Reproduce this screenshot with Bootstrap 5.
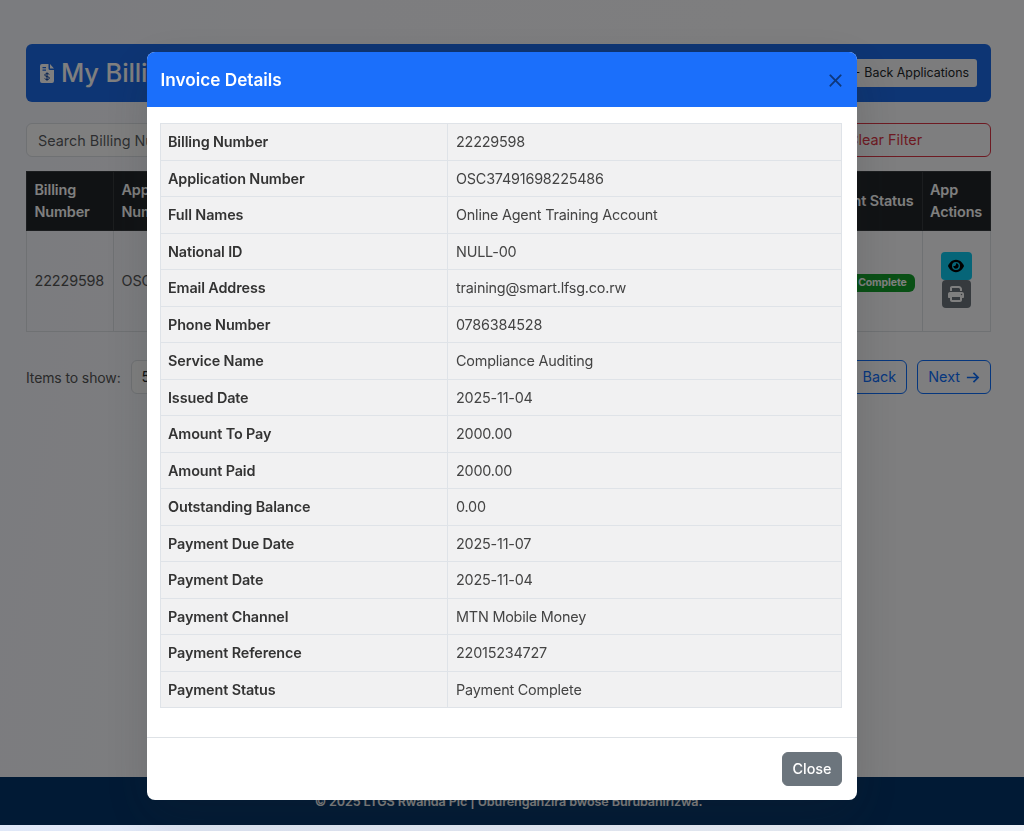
<!DOCTYPE html>
<html lang="en">
<head>
<meta charset="utf-8">
<title>My Billing Invoices</title>
<link href="https://cdn.jsdelivr.net/npm/bootstrap@5.3.0/dist/css/bootstrap.min.css" rel="stylesheet">
<style>
html,body{height:100%}
body{font-family:"Inter","Liberation Sans",sans-serif;font-size:14.4px;letter-spacing:-.12px;background:linear-gradient(90deg,#e0e8f8,#f0f4fa);color:#555;overflow:hidden;display:flex;flex-direction:column}
.page-shell{height:825px;display:flex;flex-direction:column;background:linear-gradient(100deg,#f6f8ff,#fbfbff 30%,#fdfdff);flex:none}
.page-main{flex:1;padding:44px 33px 0 26px}
.title-bar{height:58px;background:#1b6ae8;border-radius:6px;padding:0 14px;margin-bottom:21px;color:#fff}
.title-bar h2{font-size:25.5px;font-weight:500;margin:0;line-height:1}
.title-icon{width:14px;height:19px;fill:currentColor;margin-right:7px}
.back-btn{font-size:12.4px;padding:4px 8px;height:28px;background:#f8f9fa;color:#212529;border:0;border-radius:3px}
.filter-row{margin-bottom:14px;height:34px}
.search-box{flex:1;font-size:14.4px;height:34px;padding:5px 11px}
.clear-btn{width:212px;height:34px;font-size:14.4px;padding:0}
.bill-table{table-layout:fixed;width:100%;margin-bottom:28px;font-size:14.4px;--bs-table-color:#555}
.bill-table th{padding:7px 7.5px;line-height:22px;font-weight:600;vertical-align:middle}
.bill-table td{height:101px;padding:8px 7.5px;vertical-align:middle}
.col-num{width:87px}.col-app{width:140px}.col-wide{width:181.5px}.col-act{width:68.5px}
.status-head{white-space:nowrap}
.pay-badge{font-size:10.5px;font-weight:700;background:#12a02a;white-space:nowrap;padding:4px 8px 4px 5px;margin-left:.5px}
.act-cell{padding-bottom:10px!important}
.act-btn{width:31px;height:28px;padding:0;display:flex;align-items:center;justify-content:center;margin:0 auto;border-radius:4px}
.act-btn svg{width:16px;height:16px;fill:currentColor}
.act-view{background:#0dcaf0;color:#000;border:0}
.act-print{background:#6c757d;color:#fff;border:0;width:29px}
.pager-row{height:34px}
.items-label{font-size:14px}
.items-select{width:70px;height:34px;font-size:14.4px;padding:4px 10px;margin-left:10px}
.pager-btn{height:34px;padding:0 10px;font-size:14.4px;display:inline-flex;align-items:center;gap:5px}
.pager-gap{gap:10px}
.pager-btn svg{width:15px;height:15px;fill:none;stroke:currentColor;stroke-width:1.8}
.site-foot{height:48px;background:#03346a;color:#fff;font-size:12.6px;font-weight:600;text-align:center;padding:16px 7px 0 0;flex:none}
.modal-backdrop.dim-layer{height:825px;width:100%;bottom:auto}
.invoice-dialog{max-width:none;width:710.5px;margin:52px 0 0 146.5px}
.invoice-dialog .modal-content{border:0;border-radius:8px;height:748px;overflow:hidden}
.invoice-dialog .modal-header{background:#1b6ffb;color:#fff;height:55px;padding:1px 14px 0;border:0;border-radius:0}
.invoice-dialog .modal-title{font-size:17.2px;font-weight:600;line-height:1;letter-spacing:0}
.invoice-dialog .btn-close{margin:0;padding:0;width:15px;height:15px;background-size:15px;opacity:.5;flex:none}
.invoice-dialog .modal-body{padding:16px 15px 0 13.5px;flex:none;height:630px;margin:0}
.detail-table{width:100%;margin:0;font-size:14.4px;table-layout:fixed;--bs-table-bg:#f1f1f2;--bs-table-color:#444;border-color:#dfe3e8}
.detail-table th,.detail-table td{padding:7px;line-height:21.5px;height:36.5px}
.detail-table td{padding-left:8px;letter-spacing:-.2px}
.detail-table th{width:287px;font-weight:600;color:#333}
.invoice-dialog .modal-footer{border-top:1px solid #dee2e6;padding:14px 15px;height:63px;justify-content:flex-end}
.close-btn{margin:0;height:34px;width:60px;padding:0;font-size:14.4px;font-weight:500}
</style>
</head>
<body>
<div class="page-shell">
  <main class="page-main">
    <div class="title-bar d-flex align-items-center justify-content-between">
      <h2 class="d-flex align-items-center">
        <svg class="title-icon" viewBox="0 0 14 19"><path fill-rule="evenodd" d="M2 0h6.500v4.500a1.500 1.500 0 0 0 1.500 1.500h4v11a2 2 0 0 1-2 2H2a2 2 0 0 1-2-2V2a2 2 0 0 1 2-2zM10 0l4 4.500h-4zM2.500 3h3.500v1.200H2.500zM2.500 5.500h3.500v1.200H2.500z"/><path d="M9.300 10.400c-.4-.5-1.200-.8-2.300-.8-1.200 0-2.200.5-2.200 1.500 0 2 4.600.9 4.600 2.900 0 1-1 1.500-2.300 1.500-1.200 0-2-.4-2.500-1M7 8.400v8.400" fill="none" stroke="#0f45a0" stroke-width="1"/></svg>
        My Billing Invoices
      </h2>
      <button class="btn back-btn d-inline-flex align-items-center gap-1">← Back Applications</button>
    </div>
    <div class="filter-row d-flex gap-2">
      <input class="form-control search-box" placeholder="Search Billing Number">
      <button class="btn btn-outline-danger clear-btn"><span>Clear Filter</span></button>
    </div>
    <table class="table table-bordered bill-table">
      <colgroup><col class="col-num"><col class="col-app"><col class="col-wide"><col class="col-wide"><col class="col-wide"><col><col class="col-act"></colgroup>
      <thead class="table-dark"><tr><th>Billing Number</th><th>Application Number</th><th>Full Names</th><th>Service Name</th><th>Amount To Pay</th><th class="status-head">Payment Status</th><th>App Actions</th></tr></thead>
      <tbody><tr><td>22229598</td><td>OSC37491698225486</td><td>Online Agent</td><td>Compliance Auditing</td><td>2000.00</td><td><span class="badge pay-badge">Payment Complete</span></td>
      <td class="act-cell"><button class="btn act-btn act-view" aria-label="View"><svg viewBox="0 0 576 512"><path d="M288 32c-80.800 0-145.500 36.800-192.600 80.600C48.600 156 17.300 208 2.500 243.700c-3.300 7.900-3.300 16.700 0 24.600C17.300 304 48.600 356 95.400 399.400C142.500 443.200 207.200 480 288 480s145.500-36.800 192.600-80.600c46.800-43.500 78.100-95.400 93-131.100c3.300-7.900 3.300-16.700 0-24.600c-14.900-35.700-46.200-87.700-93-131.100C433.500 68.800 368.800 32 288 32zM144 256a144 144 0 1 1 288 0 144 144 0 1 1-288 0zm144-64c0 35.300-28.700 64-64 64c-7.100 0-13.900-1.200-20.300-3.300c-5.500-1.800-11.900 1.600-11.700 7.400c.3 6.900 1.300 13.800 3.200 20.700c13.700 51.200 66.400 81.600 117.600 67.900s81.600-66.400 67.900-117.600c-11.100-41.500-47.800-69.400-88.600-71.100c-5.800-.2-9.200 6.100-7.400 11.700c2.100 6.400 3.300 13.200 3.300 20.300z"/></svg></button>
      <button class="btn act-btn act-print" aria-label="Print"><svg viewBox="0 0 512 512"><path d="M128 0C92.700 0 64 28.700 64 64v96h64V64H354.700L384 93.300V160h64V93.300c0-17-6.700-33.300-18.700-45.300L400 18.700C388 6.700 371.700 0 354.700 0H128zM384 352v32 64H128V384 368 352H384zm64 32h32c17.700 0 32-14.300 32-32V256c0-35.300-28.700-64-64-64H64c-35.300 0-64 28.700-64 64v96c0 17.700 14.300 32 32 32H64v64c0 35.300 28.700 64 64 64H384c35.300 0 64-28.700 64-64V384zM432 248a24 24 0 1 1 0 48 24 24 0 1 1 0-48z"/></svg></button></td></tr></tbody>
    </table>
    <div class="pager-row d-flex align-items-center justify-content-between">
      <div class="d-flex align-items-center"><span class="items-label">Items to show:</span><select class="form-select items-select"><option>5</option></select></div>
      <div class="d-flex pager-gap">
        <button class="btn btn-outline-primary pager-btn"><svg viewBox="0 0 16 16"><path d="M14 8H2M7 3 2 8l5 5"/></svg>Back</button>
        <button class="btn btn-outline-primary pager-btn">Next<svg viewBox="0 0 16 16"><path d="M2 8h12M9 3l5 5-5 5"/></svg></button>
      </div>
    </div>
  </main>
  <footer class="site-foot">© 2025 LTGS Rwanda Plc | Uburenganzira bwose Burubahirizwa.</footer>
</div>
<div class="modal-backdrop fade show dim-layer"></div>
<div class="modal fade show d-block" tabindex="-1" role="dialog" aria-modal="true">
  <div class="modal-dialog invoice-dialog">
    <div class="modal-content shadow-lg">
      <div class="modal-header d-flex justify-content-between align-items-center">
        <h5 class="modal-title">Invoice Details</h5>
        <button type="button" class="btn-close" aria-label="Close"></button>
      </div>
      <div class="modal-body">
        <table class="table table-bordered detail-table">
          <tbody>
            <tr><th>Billing Number</th><td>22229598</td></tr>
            <tr><th>Application Number</th><td>OSC37491698225486</td></tr>
            <tr><th>Full Names</th><td>Online Agent Training Account</td></tr>
            <tr><th>National ID</th><td>NULL-00</td></tr>
            <tr><th>Email Address</th><td>training@smart.lfsg.co.rw</td></tr>
            <tr><th>Phone Number</th><td>0786384528</td></tr>
            <tr><th>Service Name</th><td>Compliance Auditing</td></tr>
            <tr><th>Issued Date</th><td>2025-11-04</td></tr>
            <tr><th>Amount To Pay</th><td>2000.00</td></tr>
            <tr><th>Amount Paid</th><td>2000.00</td></tr>
            <tr><th>Outstanding Balance</th><td>0.00</td></tr>
            <tr><th>Payment Due Date</th><td>2025-11-07</td></tr>
            <tr><th>Payment Date</th><td>2025-11-04</td></tr>
            <tr><th>Payment Channel</th><td>MTN Mobile Money</td></tr>
            <tr><th>Payment Reference</th><td>22015234727</td></tr>
            <tr><th>Payment Status</th><td>Payment Complete</td></tr>
          </tbody>
        </table>
      </div>
      <div class="modal-footer">
        <button type="button" class="btn btn-secondary close-btn">Close</button>
      </div>
    </div>
  </div>
</div>
<script src="https://cdn.jsdelivr.net/npm/bootstrap@5.3.0/dist/js/bootstrap.bundle.min.js"></script>
</body>
</html>
